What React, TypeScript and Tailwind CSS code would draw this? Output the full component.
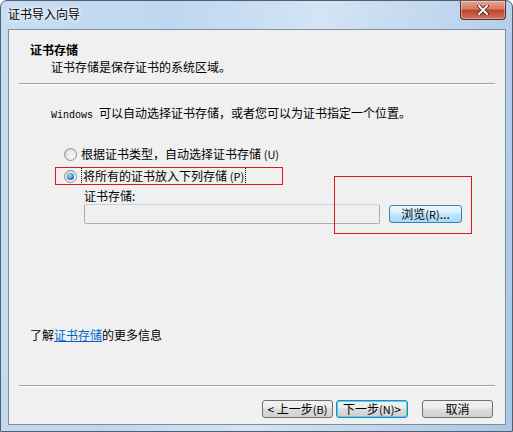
const cjk = "font-['Noto_Sans_CJK_SC','Noto_Sans',sans-serif]";

const Radio = ({ checked }: { checked?: boolean }) => (
  <span className="relative flex h-[13px] w-[13px] items-center justify-center rounded-full border border-[#8e8f8f] bg-gradient-to-br from-[#d2d2d2] to-[#fbfbfb]">
    {checked ? (
      <span className="h-[7px] w-[7px] rounded-full bg-[radial-gradient(circle_at_40%_35%,#a9e1fa,#1f6fb3_70%,#0f4f8f)]" />
    ) : (
      <span className="h-[7px] w-[7px] rounded-full bg-gradient-to-br from-[#e8e8e8] to-[#f7f7f7]" />
    )}
  </span>
);

const WinButton = ({
  children,
  variant = "normal",
  className = "",
}: {
  children: React.ReactNode;
  variant?: "normal" | "focus" | "hover";
  className?: string;
}) => {
  const styles = {
    normal: "border-[#707070] bg-[linear-gradient(#f2f2f2,#ebebeb_45%,#dddddd_50%,#cfcfcf)]",
    focus: "border-[#3c7fb1] bg-[linear-gradient(#f2f2f2,#ebebeb_45%,#dddddd_50%,#cfcfcf)] shadow-[inset_0_0_0_1px_#48d8fb]",
    hover: "border-[#3c7fb1] bg-[linear-gradient(#eaf6fd,#d9f0fc_45%,#bee6fd_50%,#a7d9f5)]",
  };
  return (
    <div
      className={`flex h-[18px] items-center justify-center rounded-[3px] border text-[12px] leading-none text-black ${styles[variant]} ${className}`}
    >
      {children}
    </div>
  );
};

export default function App() {
  return (
    <div className={`h-[432px] w-[513px] overflow-hidden bg-white ${cjk}`}>
      <div className="relative flex h-[432px] w-[513px] flex-col rounded-t-[7px] border border-[#555d68] bg-[linear-gradient(100deg,#c7ddf2_0%,#bed7f0_30%,#d3e4f5_55%,#bcd4ec_80%,#a9c7e6_100%)]">
        {/* title bar */}
        <div className="flex h-[28px] items-start justify-between">
          <span className="ml-[7px] mt-[5px] text-[12px] leading-[16px] text-black [text-shadow:0_0_6px_#ffffff,0_0_4px_#ffffff]">
            证书导入向导
          </span>
          <div className="mr-[6px] flex h-[19px] w-[46px] items-center justify-center rounded-b-[4px] border border-t-0 border-[#5a2f2a] bg-[linear-gradient(#e8a493,#d27a64_45%,#c0442b_50%,#d0705b)] shadow-[inset_0_0_0_1px_rgba(255,255,255,0.35)]">
            <svg width="12" height="10" viewBox="0 0 12 10">
              <path d="M2 1 L10 9 M10 1 L2 9" stroke="#3a1a14" strokeWidth="3.6" strokeLinecap="square" />
              <path d="M2 1 L10 9 M10 1 L2 9" stroke="#ffffff" strokeWidth="2" strokeLinecap="square" />
            </svg>
          </div>
        </div>

        {/* client area */}
        <div className="relative ml-[7px] mr-[6px] h-[396px] border border-[#7f8fa3] bg-[#f0f0f0] text-[12px] leading-[16px] text-black">
          {/* header */}
          <div className="h-[53px] pl-[21px] pt-[12px]">
            <div className="font-bold">证书存储</div>
            <div className="mt-[1px] pl-[21px]">证书存储是保存证书的系统区域。</div>
          </div>
          <div className="ml-[10px] mr-[10px] h-[2px] border-t border-b border-t-[#a0a0a0] border-b-white" />

          {/* body */}
          <div className="mt-[20px] pl-[42px]">
            <span className="font-['Liberation_Mono',monospace] text-[10px]">Windows </span>
            可以自动选择证书存储，或者您可以为证书指定一个位置。
          </div>

          <div className="mt-[22px] flex items-center gap-[4px] pl-[55px]">
            <Radio />
            <span>
              根据证书类型，自动选择证书存储 <span className="text-[11px]">(U)</span>
            </span>
          </div>
          <div className="mt-[5px] flex items-center gap-[4px] pl-[55px]">
            <Radio checked />
            <span className="border border-dotted border-black px-px">
              将所有的证书放入下列存储 <span className="text-[11px]">(P)</span>
            </span>
          </div>
          <div className="mt-[3px] pl-[75px]">证书存储:</div>
          <div className="flex items-center pl-[75px]">
            <div className="h-[20px] w-[296px] rounded-[2px] border border-[#abadb3] border-t-[#c5d4e3] bg-[#f0f0f0]" />
            <WinButton variant="hover" className="ml-[9px] w-[73px]">
              浏览 <span className="text-[11px]">(R)</span>...
            </WinButton>
          </div>

          <div className="mt-[103px] pl-[21px]">
            了解<span className="text-[#0066cc] underline">证书存储</span>的更多信息
          </div>

          <div className="ml-[10px] mr-[10px] mt-[42px] h-[2px] border-t border-b border-t-[#a0a0a0] border-b-white" />

          <div className="mt-[13px] flex pl-[253px]">
            <WinButton className="w-[71px]">
              &lt; 上一步 <span className="text-[11px]">(B)</span>
            </WinButton>
            <WinButton variant="focus" className="ml-[3px] w-[72px]">
              下一步 <span className="text-[11px]">(N)</span> &gt;
            </WinButton>
            <WinButton className="ml-[14px] w-[71px]">取消</WinButton>
          </div>

          {/* red annotation boxes */}
          <div className="absolute left-[46px] top-[137px] h-[18px] w-[228px] border border-[#e0141e]" />
          <div className="absolute left-[325px] top-[146px] h-[58px] w-[138px] border border-[#e0141e]" />
        </div>
      </div>
    </div>
  );
}
